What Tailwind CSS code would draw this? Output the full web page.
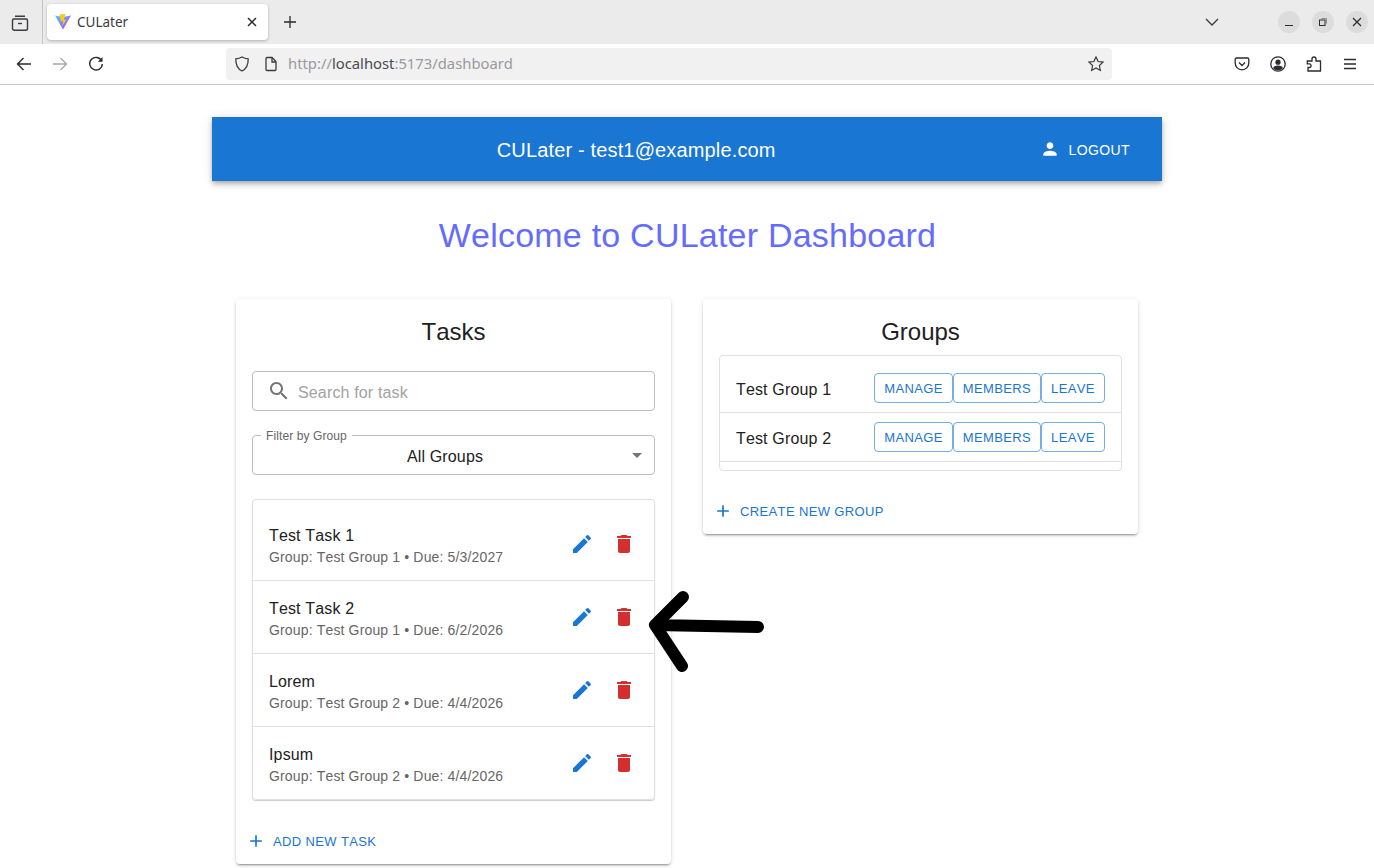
<!DOCTYPE html>
<html lang="en">
<head>
<meta charset="utf-8">
<title>CULater</title>
<script src="https://cdn.jsdelivr.net/npm/@tailwindcss/browser@4"></script>
</head>
<body class="relative h-[868px] w-[1374px] overflow-hidden bg-white font-['Liberation_Sans',sans-serif] text-[#213547] [font-kerning:none]">
<!-- Tab bar -->
<div class="flex h-[44px] items-center bg-[#ebebeb]">
  <div class="flex h-full w-[43px] items-center justify-center border-r border-[#c4c4c4]">
    <svg class="ml-[-3px] mt-[1px] h-[18px] w-[18px]" viewBox="0 0 18 18" fill="none" stroke="#3b3b3f" stroke-width="1.4"><path d="M4 2.200h10M2.700 5h12.600c.7 0 1.200.5 1.200 1.200v8.200c0 1-.8 1.800-1.800 1.800H3.300c-1 0-1.800-.8-1.800-1.800V6.200c0-.7.500-1.200 1.200-1.200z"/><path d="M7 9.500h4"/></svg>
  </div>
  <div class="ml-[4px] flex h-[36px] w-[221px] items-center rounded-[4px] bg-white pl-[8px] pr-[10px] shadow-[0_1px_3px_rgba(0,0,0,0.25)]">
    <svg class="h-[16px] w-[16px] shrink-0" viewBox="0 0 16 16"><defs><linearGradient id="v1" x1="0" y1="0" x2="1" y2="1"><stop offset="0" stop-color="#41d1ff"/><stop offset="1" stop-color="#bd34fe"/></linearGradient></defs><path d="M0 1.500 8 15.500 16 1.500 8 3z" fill="url(#v1)"/><path d="M4.500.5 10.500 0 9 6l2.500-.5L7.500 12 8 7 5.800 7.500z" fill="#ffc517"/></svg>
    <span class="ml-[6px] flex-1 pt-[2px] font-['Noto_Sans',sans-serif] text-[13.500px] leading-none text-[#3b3b3f]">CULater</span>
    <svg class="h-[12px] w-[12px]" viewBox="0 0 12 12" fill="none" stroke="#2b2b30" stroke-width="1.500"><path d="M2 2l8 8M10 2l-8 8"/></svg>
  </div>
  <svg class="ml-[15px] h-[14px] w-[14px]" viewBox="0 0 14 14" fill="none" stroke="#2b2b30" stroke-width="1.300"><path d="M7 1v12M1 7h12"/></svg>
  <svg class="ml-[908px] h-[10px] w-[14px]" viewBox="0 0 14 10" fill="none" stroke="#3b3b3f" stroke-width="1.300"><path d="M1 2l6 6 6-6"/></svg>
  <div class="ml-[59px] flex h-[22px] w-[22px] items-center justify-center rounded-full bg-[#dcdcdc]"><svg class="h-[10px] w-[10px]" viewBox="0 0 10 10" stroke="#2b2b30" fill="none"><path d="M1 8.500h8"/></svg></div>
  <div class="ml-[12px] flex h-[22px] w-[22px] items-center justify-center rounded-full bg-[#dcdcdc]"><svg class="h-[10px] w-[10px]" viewBox="0 0 10 10" stroke="#2b2b30" fill="none"><rect x="1.500" y="3" width="5.500" height="5.500"/><path d="M3.500 1.500h5v5" stroke="#8a8a8a"/></svg></div>
  <div class="ml-[12px] flex h-[22px] w-[22px] items-center justify-center rounded-full bg-[#dcdcdc]"><svg class="h-[10px] w-[10px]" viewBox="0 0 10 10" stroke="#2b2b30" stroke-width="1.200" fill="none"><path d="M1 1l8 8M9 1l-8 8"/></svg></div>
</div>
<!-- Toolbar -->
<div class="flex h-[41px] items-center border-b border-[#c8c8c8] bg-white pb-[1px]">
  <svg class="ml-[16px] h-[16px] w-[16px]" viewBox="0 0 16 16" fill="none" stroke="#2b2b30" stroke-width="1.400"><path d="M15 8H1.500M7.500 2 1.500 8l6 6"/></svg>
  <svg class="ml-[20px] h-[16px] w-[16px]" viewBox="0 0 16 16" fill="none" stroke="#a8a8aa" stroke-width="1.400"><path d="M1 8h13.500M8.500 2l6 6-6 6"/></svg>
  <svg class="ml-[20px] h-[16px] w-[16px]" viewBox="0 0 16 16" fill="none" stroke="#2b2b30" stroke-width="1.400"><path d="M13.700 5A6.300 6.300 0 1 0 14.300 8"/><path d="M14.500 1v4.700H9.800z" fill="#2b2b30" stroke="none"/></svg>
  <div class="ml-[122px] flex h-[32px] w-[886px] items-center rounded-[4px] bg-[#f1f1f1] pl-[8px] pr-[8px]">
    <svg class="h-[16px] w-[16px]" viewBox="0 0 16 16" fill="none" stroke="#3b3b3f" stroke-width="1.300"><path d="M8 1c2 1.200 4 1.700 6.200 1.800C14.300 9 12.500 13 8 15 3.500 13 1.700 9 1.800 2.800 4 2.700 6 2.200 8 1z"/></svg>
    <svg class="ml-[13px] h-[16px] w-[16px]" viewBox="0 0 16 16" fill="none" stroke="#3b3b3f" stroke-width="1.300"><path d="M3 2.500c0-.5.500-1 1-1h5l4 4v8c0 .5-.5 1-1 1H4c-.5 0-1-.5-1-1z"/><path d="M9 1.500V6h4"/></svg>
    <span class="ml-[9px] flex-1 font-['Noto_Sans',sans-serif] text-[14.800px] leading-none text-[#9a9a9e]">http://<span class="text-[#4a4a4f]">localhost</span>:5173/dashboard</span>
    <svg class="h-[16px] w-[16px]" viewBox="0 0 16 16" fill="none" stroke="#3b3b3f" stroke-width="1.200"><path d="M8 1l2.100 4.500 4.900.6-3.600 3.400.9 4.900L8 12l-4.300 2.400.9-4.900L1 6.100l4.900-.6z"/></svg>
  </div>
  <svg class="ml-[122px] h-[16px] w-[16px]" viewBox="0 0 16 16" fill="none" stroke="#2b2b30" stroke-width="1.300"><path d="M2.500 2h11c.8 0 1.300.5 1.300 1.300V7c0 4-3 6.800-6.800 6.800S1.200 11 1.200 7V3.300C1.200 2.500 1.700 2 2.500 2z"/><path d="M5 6.500l3 3 3-3"/></svg>
  <svg class="ml-[20px] h-[16px] w-[16px]" viewBox="0 0 16 16"><circle cx="8" cy="8" r="7.200" fill="none" stroke="#2b2b30" stroke-width="1.300"/><circle cx="8" cy="6.200" r="2.600" fill="#2b2b30"/><path d="M3 12c1-2 3-2.600 5-2.600s4 .6 5 2.600c-1.200 1.400-3 2.300-5 2.300S4.200 13.400 3 12z" fill="#2b2b30"/></svg>
  <svg class="ml-[20px] h-[16px] w-[16px]" viewBox="0 0 16 16" fill="none" stroke="#2b2b30" stroke-width="1.300"><path d="M2 15V11.500H3.300a1.800 1.800 0 0 0 0-3.600H1.300V5H6V3a2 2 0 0 1 2-2 2 2 0 0 1 2 2v2h4.500v10z"/></svg>
  <svg class="ml-[20px] h-[16px] w-[16px]" viewBox="0 0 16 16" fill="none" stroke="#2b2b30" stroke-width="1.300"><path d="M2 3.500h12M2 8h12M2 12.500h12"/></svg>
</div>
<!-- Page -->
<div class="flex flex-col items-center pt-[32px]">
  <header class="flex h-[64px] w-[950px] items-center bg-[#1976d2] pl-[24px] pr-[24px] text-white shadow-[0_2px_4px_-1px_rgba(0,0,0,0.2),0_4px_5px_0_rgba(0,0,0,0.14),0_1px_10px_0_rgba(0,0,0,0.12)]">
    <div class="flex-1 pl-[4px] pt-[2px] text-center text-[20px] leading-[32px] tracking-[0.15px]">CULater - test1@example.com</div>
    <button class="flex h-[36px] items-center gap-[8px] px-[8px] text-[14px] tracking-[0.4px] text-white">
      <svg class="h-[20px] w-[20px]" viewBox="0 0 24 24" fill="currentColor"><path d="M12 12c2.210 0 4-1.790 4-4s-1.790-4-4-4-4 1.790-4 4 1.790 4 4 4m0 2c-2.670 0-8 1.340-8 4v2h16v-2c0-2.660-5.330-4-8-4"/></svg>
      <span class="pt-[2px]">LOGOUT</span>
    </button>
  </header>
  <h1 class="mt-[32px] pl-[1px] text-[34px] font-normal leading-[44px] tracking-[0.22px] text-[#646cff]">Welcome to CULater Dashboard</h1>
  <div class="mt-[42px] flex items-start gap-[32px]">
    <!-- Tasks -->
    <section class="flex w-[435px] flex-col rounded-[4px] bg-white px-[16px] pb-[5px] pt-[16px] shadow-[0_3px_1px_-2px_rgba(0,0,0,0.2),0_2px_2px_0_rgba(0,0,0,0.14),0_1px_5px_0_rgba(0,0,0,0.12)]">
      <h2 class="h-[32px] pt-[1px] text-center text-[24px] font-normal leading-[32px] text-[#212121]">Tasks</h2>
      <div class="mt-[24px] flex h-[40px] items-center rounded-[4px] border border-[#bdbdbd] pl-[14px]">
        <svg class="h-[24px] w-[24px] text-[#757575]" viewBox="0 0 24 24" fill="currentColor"><path d="M15.500 14h-.79l-.28-.27C15.410 12.590 16 11.110 16 9.500 16 5.910 13.090 3 9.500 3S3 5.910 3 9.500 5.910 16 9.500 16c1.610 0 3.090-.59 4.230-1.570l.27.28v.79l5 4.990L20.490 19zm-6 0C7.010 14 5 11.990 5 9.500S7.010 5 9.500 5 14 7.010 14 9.500 11.990 14 9.500 14"/></svg>
        <input class="ml-[7px] flex-1 bg-transparent pt-[4px] text-[16px] tracking-[0.15px] outline-none placeholder:text-[#a2a2a2]" placeholder="Search for task">
      </div>
      <div class="relative mt-[24px] flex h-[40px] items-center rounded-[4px] border border-[#bdbdbd] pr-[19px]">
        <span class="absolute left-[8px] top-[-6px] bg-white px-[5px] text-[12px] leading-[12px] tracking-[0.1px] text-[#666666]">Filter by Group</span>
        <span class="flex-1 pl-[2px] pt-[4px] text-center text-[16px] leading-[24px] tracking-[0.15px] text-[#212121]">All Groups</span>
        <svg class="absolute right-[5px] top-[7px] h-[24px] w-[24px] text-[#757575]" viewBox="0 0 24 24" fill="currentColor"><path d="m7 10 5 5 5-5z"/></svg>
      </div>
      <div class="mt-[24px] rounded-[4px] border-x border-t border-[#e0e0e0] pt-[8px] shadow-[0_1px_1px_rgba(0,0,0,0.2)]">
        <div class="flex h-[73px] items-center border-b border-[#e0e0e0] pl-[16px] pr-[18px]">
          <div class="flex-1 pt-[2px]"><div class="mt-[1px] text-[16px] leading-[24px] tracking-[0.15px] text-[#212121]">Test Task 1</div><div class="mt-[-1px] text-[14px] leading-[20px] tracking-[0.15px] text-[#666666]">Group: Test Group 1 • Due: 5/3/2027</div></div>
          <svg class="h-[24px] w-[24px] text-[#1976d2]" viewBox="0 0 24 24" fill="currentColor"><path d="M3 17.250V21h3.750L17.810 9.940l-3.750-3.750zM20.710 7.040c.39-.39.39-1.020 0-1.410l-2.340-2.340a.9959.9959 0 0 0-1.410 0l-1.830 1.830 3.750 3.750z"/></svg>
          <svg class="ml-[18px] h-[24px] w-[24px] text-[#d32f2f]" viewBox="0 0 24 24" fill="currentColor"><path d="M6 19c0 1.100.9 2 2 2h8c1.100 0 2-.9 2-2V7H6zM19 4h-3.500l-1-1h-5l-1 1H5v2h14z"/></svg>
        </div>
        <div class="flex h-[73px] items-center border-b border-[#e0e0e0] pl-[16px] pr-[18px]">
          <div class="flex-1 pt-[2px]"><div class="mt-[1px] text-[16px] leading-[24px] tracking-[0.15px] text-[#212121]">Test Task 2</div><div class="mt-[-1px] text-[14px] leading-[20px] tracking-[0.15px] text-[#666666]">Group: Test Group 1 • Due: 6/2/2026</div></div>
          <svg class="h-[24px] w-[24px] text-[#1976d2]" viewBox="0 0 24 24" fill="currentColor"><path d="M3 17.250V21h3.750L17.810 9.940l-3.750-3.750zM20.710 7.040c.39-.39.39-1.020 0-1.410l-2.340-2.340a.9959.9959 0 0 0-1.410 0l-1.830 1.830 3.750 3.750z"/></svg>
          <svg class="ml-[18px] h-[24px] w-[24px] text-[#d32f2f]" viewBox="0 0 24 24" fill="currentColor"><path d="M6 19c0 1.100.9 2 2 2h8c1.100 0 2-.9 2-2V7H6zM19 4h-3.500l-1-1h-5l-1 1H5v2h14z"/></svg>
        </div>
        <div class="flex h-[73px] items-center border-b border-[#e0e0e0] pl-[16px] pr-[18px]">
          <div class="flex-1 pt-[2px]"><div class="mt-[1px] text-[16px] leading-[24px] tracking-[0.15px] text-[#212121]">Lorem</div><div class="mt-[-1px] text-[14px] leading-[20px] tracking-[0.15px] text-[#666666]">Group: Test Group 2 • Due: 4/4/2026</div></div>
          <svg class="h-[24px] w-[24px] text-[#1976d2]" viewBox="0 0 24 24" fill="currentColor"><path d="M3 17.250V21h3.750L17.810 9.940l-3.750-3.750zM20.710 7.040c.39-.39.39-1.020 0-1.410l-2.340-2.340a.9959.9959 0 0 0-1.410 0l-1.830 1.830 3.750 3.750z"/></svg>
          <svg class="ml-[18px] h-[24px] w-[24px] text-[#d32f2f]" viewBox="0 0 24 24" fill="currentColor"><path d="M6 19c0 1.100.9 2 2 2h8c1.100 0 2-.9 2-2V7H6zM19 4h-3.500l-1-1h-5l-1 1H5v2h14z"/></svg>
        </div>
        <div class="flex h-[73px] items-center rounded-b-[4px] border-b border-[#e0e0e0] pl-[16px] pr-[18px]">
          <div class="flex-1 pt-[2px]"><div class="mt-[1px] text-[16px] leading-[24px] tracking-[0.15px] text-[#212121]">Ipsum</div><div class="mt-[-1px] text-[14px] leading-[20px] tracking-[0.15px] text-[#666666]">Group: Test Group 2 • Due: 4/4/2026</div></div>
          <svg class="h-[24px] w-[24px] text-[#1976d2]" viewBox="0 0 24 24" fill="currentColor"><path d="M3 17.250V21h3.750L17.810 9.940l-3.750-3.750zM20.710 7.040c.39-.39.39-1.020 0-1.410l-2.340-2.340a.9959.9959 0 0 0-1.410 0l-1.830 1.830 3.750 3.750z"/></svg>
          <svg class="ml-[18px] h-[24px] w-[24px] text-[#d32f2f]" viewBox="0 0 24 24" fill="currentColor"><path d="M6 19c0 1.100.9 2 2 2h8c1.100 0 2-.9 2-2V7H6zM19 4h-3.500l-1-1h-5l-1 1H5v2h14z"/></svg>
        </div>
      </div>
      <button class="mt-[23px] ml-[-6px] flex h-[36px] items-center gap-[7px] self-start text-[13px] tracking-[0.37px] text-[#1976d2]">
        <svg class="h-[20px] w-[20px]" viewBox="0 0 24 24" fill="currentColor"><path d="M19 13h-6v6h-2v-6H5v-2h6V5h2v6h6z"/></svg>
        <span class="pt-[1px]">ADD NEW TASK</span>
      </button>
    </section>
    <!-- Groups -->
    <section class="flex w-[435px] flex-col rounded-[4px] bg-white px-[16px] pb-[5px] pt-[16px] shadow-[0_3px_1px_-2px_rgba(0,0,0,0.2),0_2px_2px_0_rgba(0,0,0,0.14),0_1px_5px_0_rgba(0,0,0,0.12)]">
      <h2 class="h-[32px] pt-[1px] text-center text-[24px] font-normal leading-[32px] text-[#212121]">Groups</h2>
      <div class="mt-[8px] rounded-[4px] border border-[#e0e0e0] pb-[8px] pt-[8px]">
        <div class="flex h-[49px] items-center border-b border-[#e0e0e0] pl-[16px] pr-[16px]">
          <div class="flex-1 pt-[4px] text-[16px] leading-[24px] tracking-[0.15px] text-[#212121]">Test Group 1</div>
          <div class="flex text-[13px] tracking-[0.37px] text-[#1976d2]">
            <button class="h-[30px] w-[79px] rounded-[4px] border border-[#1976d2]/60 pt-[2px]">MANAGE</button>
            <button class="h-[30px] w-[88px] rounded-[4px] border border-[#1976d2]/60 pt-[2px]">MEMBERS</button>
            <button class="h-[30px] w-[64px] rounded-[4px] border border-[#1976d2]/60 pt-[2px]">LEAVE</button>
          </div>
        </div>
        <div class="flex h-[49px] items-center border-b border-[#e0e0e0] pl-[16px] pr-[16px]">
          <div class="flex-1 pt-[4px] text-[16px] leading-[24px] tracking-[0.15px] text-[#212121]">Test Group 2</div>
          <div class="flex text-[13px] tracking-[0.37px] text-[#1976d2]">
            <button class="h-[30px] w-[79px] rounded-[4px] border border-[#1976d2]/60 pt-[2px]">MANAGE</button>
            <button class="h-[30px] w-[88px] rounded-[4px] border border-[#1976d2]/60 pt-[2px]">MEMBERS</button>
            <button class="h-[30px] w-[64px] rounded-[4px] border border-[#1976d2]/60 pt-[2px]">LEAVE</button>
          </div>
        </div>
      </div>
      <button class="mt-[22px] ml-[-6px] flex h-[36px] items-center gap-[7px] self-start text-[13px] tracking-[0.37px] text-[#1976d2]">
        <svg class="h-[20px] w-[20px]" viewBox="0 0 24 24" fill="currentColor"><path d="M19 13h-6v6h-2v-6H5v-2h6V5h2v6h6z"/></svg>
        <span class="pt-[1px]">CREATE NEW GROUP</span>
      </button>
    </section>
  </div>
</div>
<!-- Hand-drawn arrow annotation -->
<svg class="absolute left-[640px] top-[585px] h-[90px] w-[130px]" viewBox="0 0 130 90" fill="none" stroke="#000" stroke-width="12" stroke-linecap="round" stroke-linejoin="round"><path d="M118 42 15 40M43 12 15 40 42 81"/></svg>
</body>
</html>
